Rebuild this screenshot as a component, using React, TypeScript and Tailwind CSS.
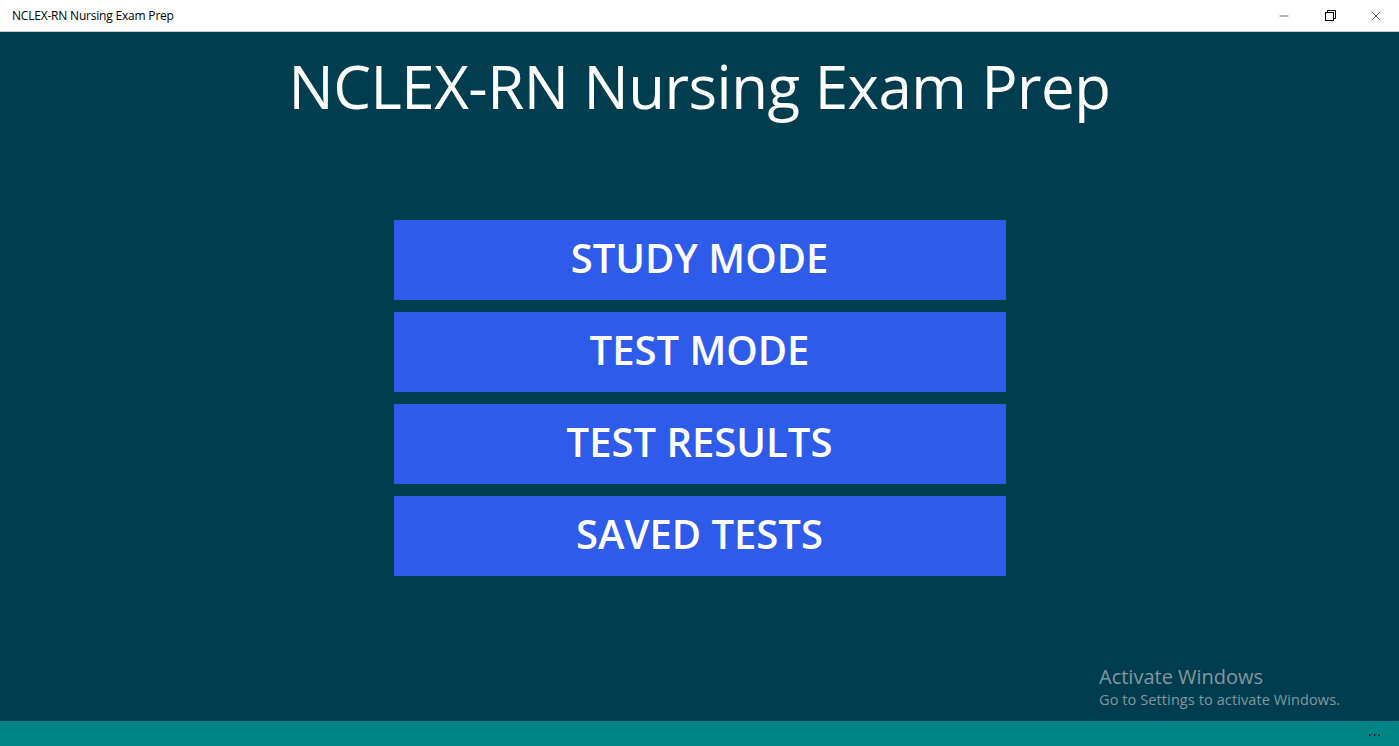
import { X, Minus } from 'lucide-react';

const menu = ['STUDY MODE', 'TEST MODE', 'TEST RESULTS', 'SAVED TESTS'];

function RestoreIcon() {
  return (
    <svg width="11" height="11" viewBox="0 0 11 11" fill="none" stroke="currentColor" strokeWidth="1">
      <rect x="0.5" y="2.5" width="8" height="8" />
      <path d="M2.5 2.5V0.5H10.5V8.5H8.5" />
    </svg>
  );
}

export default function App() {
  return (
    <div
      className="flex flex-col w-[1399px] h-[746px] overflow-hidden bg-[#003e4f]"
      style={{ fontFamily: '"Open Sans", "Noto Sans", sans-serif' }}
    >
      {/* title bar */}
      <div className="flex items-center h-[32px] shrink-0 bg-white border-b border-[#c8c8c8] text-black">
        <span className="pl-[12px] text-[12px] tracking-[-0.2px]">NCLEX-RN Nursing Exam Prep</span>
        <div className="ml-auto flex h-full">
          <div className="w-[46px] flex items-center justify-center">
            <Minus size={14} strokeWidth={1} />
          </div>
          <div className="w-[46px] flex items-center justify-center">
            <RestoreIcon />
          </div>
          <div className="w-[46px] flex items-center justify-center">
            <X size={16} strokeWidth={1} />
          </div>
        </div>
      </div>

      {/* content */}
      <div className="relative flex-1 flex flex-col items-center">
        <h1 className="mt-[14px] text-white text-[60px] leading-[80px] tracking-[-0.5px]">
          NCLEX-RN Nursing Exam Prep
        </h1>
        <div className="mt-[94px] flex flex-col gap-[12px]">
          {menu.map((label) => (
            <button
              key={label}
              className="w-[612px] h-[80px] pb-[5px] bg-[#2f5bea] text-white text-[40px] font-semibold flex items-center justify-center"
            >
              {label}
            </button>
          ))}
        </div>

        <div className="absolute left-[1099px] top-[633px] text-[#8497a0]">
          <div className="text-[20px] leading-[24px]">Activate Windows</div>
          <div className="text-[14.5px] leading-[21px] tracking-[0.1px]">Go to Settings to activate Windows.</div>
        </div>
      </div>

      {/* app bar */}
      <div className="h-[25px] shrink-0 bg-[#008585] flex items-start justify-end pr-[17px]">
        <span className="text-black text-[14px] leading-[20px] tracking-[1px]">...</span>
      </div>
    </div>
  );
}
